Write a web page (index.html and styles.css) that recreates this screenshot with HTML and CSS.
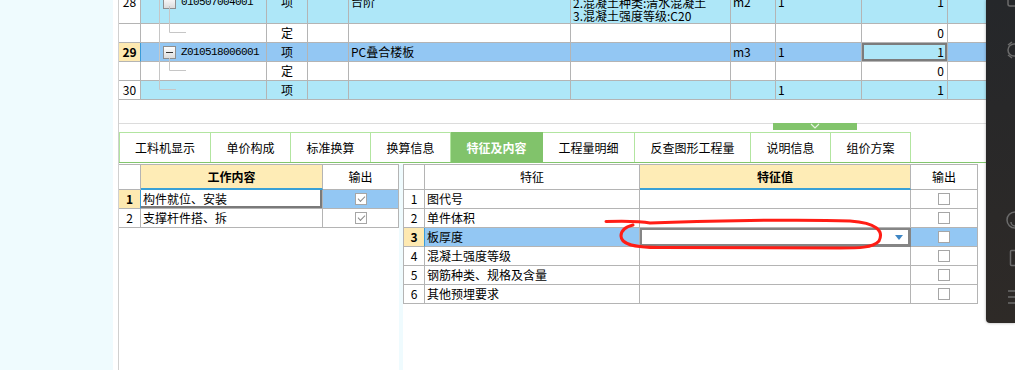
FILE: index.html
```html
<!DOCTYPE html>
<html lang="zh-CN">
<head>
    <meta charset="UTF-8">
    <title>特征及内容</title>
    <link rel="stylesheet" href="styles.css">
</head>
<body>
    <div class="side"></div>

    <div class="main">
        <div class="content">
            <!-- 清单表格 -->
            <div class="top">
                <div class="top-rows">
                    <div class="row tall item">
                        <div class="no">28</div>
                        <div class="code"><span class="box"></span><span class="mono">010507004001</span></div>
                        <div class="mid">项</div>
                        <div></div>
                        <div>台阶</div>
                        <div class="desc">
                            <span>2.混凝土种类:清水混凝土</span>
                            <span>3.混凝土强度等级:C20</span>
                        </div>
                        <div>m2</div>
                        <div>1</div>
                        <div class="right">1</div>
                        <div></div>
                    </div>
                    <div class="row">
                        <div class="no"></div>
                        <div></div>
                        <div class="mid">定</div>
                        <div></div>
                        <div></div>
                        <div></div>
                        <div></div>
                        <div></div>
                        <div class="right">0</div>
                        <div></div>
                    </div>
                    <div class="row sel">
                        <div class="no cur">29</div>
                        <div class="code"><span class="box minus"></span><span class="mono">Z010518006001</span></div>
                        <div class="mid">项</div>
                        <div></div>
                        <div>PC叠合楼板</div>
                        <div></div>
                        <div>m3</div>
                        <div>1</div>
                        <div class="right active">1</div>
                        <div></div>
                    </div>
                    <div class="row">
                        <div class="no"></div>
                        <div></div>
                        <div class="mid">定</div>
                        <div></div>
                        <div></div>
                        <div></div>
                        <div></div>
                        <div></div>
                        <div class="right">0</div>
                        <div></div>
                    </div>
                    <div class="row item">
                        <div class="no">30</div>
                        <div></div>
                        <div class="mid">项</div>
                        <div></div>
                        <div></div>
                        <div></div>
                        <div></div>
                        <div>1</div>
                        <div class="right">1</div>
                        <div></div>
                    </div>
                </div>
            </div>

            <div class="gap"></div>
            <div class="splitter">
                <div class="handle">
                    <svg width="10" height="6" viewBox="0 0 10 6"><polyline points="1,1 5,5 9,1" fill="none" stroke="#e8f5e2" stroke-width="1.2"/></svg>
                </div>
            </div>

            <!-- 页签 -->
            <div class="tabs">
                <div class="tab w92">工料机显示</div>
                <div class="tab">单价构成</div>
                <div class="tab">标准换算</div>
                <div class="tab">换算信息</div>
                <div class="tab w92 on">特征及内容</div>
                <div class="tab w92">工程量明细</div>
                <div class="tab w116">反查图形工程量</div>
                <div class="tab">说明信息</div>
                <div class="tab">组价方案</div>
            </div>

            <div class="panes">
                <!-- 工作内容 -->
                <div class="pane-left">
                    <div class="grid work head">
                        <div class="no"></div>
                        <div class="mid bold yellow cur-col">工作内容</div>
                        <div class="mid">输出</div>
                    </div>
                    <div class="grid work">
                        <div class="no cur">1</div>
                        <div class="edit">构件就位、安装</div>
                        <div class="mid blue"><span class="chk on"></span></div>
                    </div>
                    <div class="grid work">
                        <div class="no">2</div>
                        <div>支撑杆件搭、拆</div>
                        <div class="mid"><span class="chk on"></span></div>
                    </div>
                </div>

                <div class="pane-split"></div>

                <!-- 特征 -->
                <div class="pane-right">
                    <div class="grid feat head">
                        <div class="no"></div>
                        <div class="mid">特征</div>
                        <div class="mid bold yellow cur-col">特征值</div>
                        <div class="mid">输出</div>
                    </div>
                    <div class="grid feat">
                        <div class="no">1</div>
                        <div>图代号</div>
                        <div></div>
                        <div class="mid"><span class="chk"></span></div>
                    </div>
                    <div class="grid feat">
                        <div class="no">2</div>
                        <div>单件体积</div>
                        <div></div>
                        <div class="mid"><span class="chk"></span></div>
                    </div>
                    <div class="grid feat">
                        <div class="no cur">3</div>
                        <div class="blue">板厚度</div>
                        <div class="editbox">
                            <svg class="drop" width="8" height="5" viewBox="0 0 8 5"><polygon points="0,0 8,0 4,5" fill="#3f86c4"/></svg>
                        </div>
                        <div class="mid blue"><span class="chk"></span></div>
                    </div>
                    <div class="grid feat">
                        <div class="no">4</div>
                        <div>混凝土强度等级</div>
                        <div></div>
                        <div class="mid"><span class="chk"></span></div>
                    </div>
                    <div class="grid feat">
                        <div class="no">5</div>
                        <div>钢筋种类、规格及含量</div>
                        <div></div>
                        <div class="mid"><span class="chk"></span></div>
                    </div>
                    <div class="grid feat">
                        <div class="no">6</div>
                        <div>其他预埋要求</div>
                        <div></div>
                        <div class="mid"><span class="chk"></span></div>
                    </div>
                </div>
            </div>
        </div>
    </div>

    <!-- 树形连线 -->
    <svg class="tree" width="200" height="100" viewBox="0 0 200 100">
        <g stroke="#c6c6c6" stroke-width="1" fill="none">
            <path d="M159.5 0 V89.5 H176"/>
            <path d="M169.5 6 V32.5 H186"/>
            <path d="M169.5 58 V70.5 H186"/>
        </g>
    </svg>

    <!-- 红色圈注 -->
    <svg class="mark" width="1015" height="370" viewBox="0 0 1015 370">
        <path d="M606 221.5 C625 221 640 221 650 223 C700 221 800 219 850 221 C877 223 884 231 879 241 C873 248 858 248 840 248 L660 247.5 C632 247.5 621 244 621 236 C621 230 625 227 633 225" fill="none" stroke="#ff1d15" stroke-width="3" stroke-linecap="round"/>
    </svg>

    <!-- 截图工具栏 -->
    <div class="toolbar">
        <svg width="29" height="323" viewBox="0 0 29 323">
            <g fill="none" stroke="#6b6b6b" stroke-width="1.5">
                <rect x="22" y="-8" width="14" height="14" rx="2"/>
                <circle cx="28" cy="50" r="6"/>
                <path d="M22 45 L26 42 M22 55 L26 58"/>
                <circle cx="29" cy="220" r="8"/>
                <path d="M25 222 A4 4 0 0 0 33 222"/>
                <rect x="24.5" y="250.5" width="10" height="15" rx="1"/>
                <path d="M22 291 H30 M22 297 H30 M22 303 H30"/>
            </g>
        </svg>
    </div>
</body>
</html>
```

FILE: styles.css
```css
/* Estilo general */
* {
    box-sizing: border-box;
}

body {
    margin: 0;
    width: 1015px;
    height: 370px;
    overflow: hidden;
    position: relative;
    display: flex;
    font-family: "Noto Sans CJK SC", "Noto Sans", sans-serif;
    font-size: 12px;
    line-height: 14px;
    color: #000;
    background: #fff;
}

.side {
    width: 113px;
    background: #effbfe;
}

.main {
    flex: 1;
    padding-left: 5px;
    display: flex;
}

.content {
    flex: 1;
    border-left: 1px solid #d0d0d0;
    display: flex;
    flex-direction: column;
}

/* ========== Tabla superior ========== */
.top {
    height: 100px;
    overflow: hidden;
}

.top-rows {
    margin-top: -19px;
}

.row {
    display: grid;
    grid-template-columns: 22px 126px 41px 41px 222px 160px 45px 86px 86px 1fr;
    height: 19px;
}

.row.tall {
    height: 43px;
}

.row > div,
.grid > div {
    border-right: 1px solid #b4b4b4;
    border-bottom: 1px solid #b4b4b4;
    display: flex;
    align-items: center;
    padding: 0 2px;
    white-space: nowrap;
    overflow: hidden;
}

.row > div:last-child {
    border-right: none;
}

.row.item > div {
    background: #aee7f8;
}

.row.sel > div {
    background: #93c7f3;
}

.row > div.no,
.grid > div.no {
    background: #fff;
    justify-content: center;
    padding: 0;
}

.row > div.no.cur,
.grid > div.no.cur {
    background: #fde9b1;
    font-weight: bold;
    border-right-color: #3a9bd8;
}

.code {
    padding-left: 22px !important;
}

.mono {
    font-family: "Liberation Mono", monospace;
    font-size: 11px;
    letter-spacing: -0.6px;
}

.box {
    width: 13px;
    height: 13px;
    margin-right: 5px;
    border: 1px solid #8e8e8e;
    background: linear-gradient(#ffffff, #dcdcdc);
    position: relative;
    flex: none;
}

.box.minus::after {
    content: "";
    position: absolute;
    left: 2px;
    right: 2px;
    top: 5px;
    height: 1px;
    background: #333;
}

.mid {
    justify-content: center;
}

.right {
    justify-content: flex-end;
    padding-right: 3px !important;
}

.row > div.active {
    background: #aee7f8;
    box-shadow: inset 0 0 0 2px #7c7c7c;
}

.desc {
    flex-direction: column;
    align-items: flex-start !important;
    justify-content: flex-end;
    line-height: 13px;
    padding-bottom: 1px !important;
}

/* ========== Separador ========== */
.gap {
    height: 23px;
}

.splitter {
    height: 9px;
    border-top: 1px solid #dcdcdc;
    padding-left: 654px;
}

.handle {
    width: 84px;
    height: 7px;
    margin-top: -1px;
    background: #82c46c;
    display: flex;
    justify-content: center;
    align-items: flex-start;
}

/* ========== Pestañas ========== */
.tabs {
    display: flex;
    height: 31px;
    border-bottom: 1px solid #82c66d;
}

.tab {
    width: 80px;
    height: 30px;
    border-top: 1px solid #b2e5a0;
    border-right: 1px solid #b2e5a0;
    display: flex;
    align-items: center;
    justify-content: center;
}

.tab:first-child {
    border-left: 1px solid #b2e5a0;
}

.tab.w92 {
    width: 92px;
}

.tab.w116 {
    width: 116px;
}

.tab.on {
    background: #81c36b;
    border-color: #81c36b;
    color: #fff;
    font-weight: bold;
}

/* ========== Paneles inferiores ========== */
.panes {
    flex: 1;
    display: flex;
    padding-top: 1px;
}

.pane-left {
    width: 280px;
    background: #fff;
}

.pane-split {
    width: 4px;
    background: #effbfe;
}

.pane-right {
    flex: 1;
}

.grid {
    display: grid;
    height: 19px;
}

.grid.head {
    height: 26px;
}

.grid.head > div {
    border-top: 1px solid #b4b4b4;
}

.grid.work {
    grid-template-columns: 22px 182px 76px;
}

.grid.feat {
    grid-template-columns: 22px 215px 271px 67px;
}

.grid.feat > div.no {
    border-left: 1px solid #b4b4b4;
}

.bold {
    font-weight: bold;
}

.grid > div.yellow {
    background: #feecb6;
}

.grid > div.cur-col {
    border-bottom: 2px solid #39a0d6;
}

.grid > div.blue {
    background: #93c7f3;
}

.grid > div.edit {
    box-shadow: inset -2px -2px 0 #7a7a7a;
}

.grid > div.editbox {
    justify-content: flex-end;
    padding-right: 7px;
    box-shadow: inset 0 0 0 2px #858585;
    border-right-color: #858585;
    border-bottom-color: #858585;
}

.chk {
    width: 12px;
    height: 12px;
    border: 1px solid #a6a6a6;
    background: #fff;
    position: relative;
}

.chk.on::after {
    content: "";
    position: absolute;
    left: 2px;
    top: 2px;
    width: 6px;
    height: 3px;
    border-left: 1.5px solid #8a8a8a;
    border-bottom: 1.5px solid #8a8a8a;
    transform: rotate(-45deg);
}

/* ========== Capas superpuestas ========== */
.tree {
    position: absolute;
    left: 0;
    top: 0;
    pointer-events: none;
}

.mark {
    position: absolute;
    left: 0;
    top: 0;
    pointer-events: none;
}

.toolbar {
    position: absolute;
    top: 0;
    right: 0;
    width: 29px;
    height: 323px;
    background: linear-gradient(#25272a, #2e2a27);
    border-bottom-left-radius: 4px;
    box-shadow: 0 0 3px rgba(0, 0, 0, 0.35);
    overflow: hidden;
}
```
